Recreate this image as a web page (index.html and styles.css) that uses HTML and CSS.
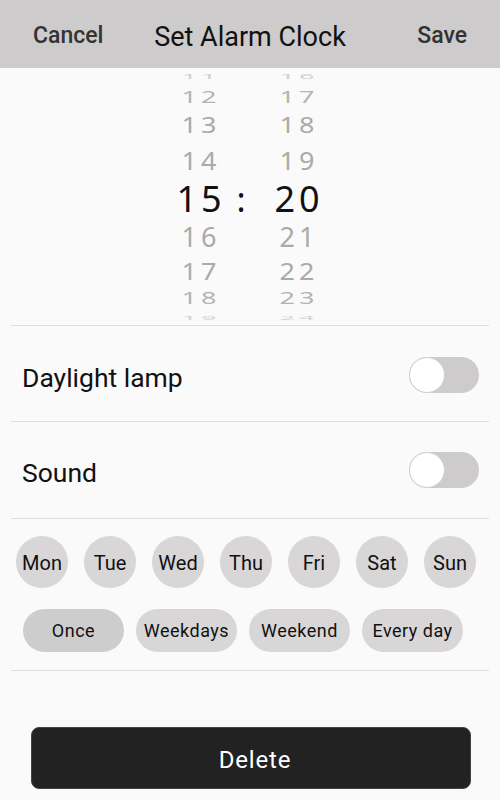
FILE: index.html
```html
<!DOCTYPE html>
<html>
<head>
<meta charset="utf-8">
<link rel="stylesheet" href="styles.css">
</head>
<body>
<div class="screen">
  <header class="topbar">
    <span class="action cancel">Cancel</span>
    <span class="title">Set Alarm Clock</span>
    <span class="action save">Save</span>
  </header>

  <section class="picker">
    <div class="cell"><span class="num s11">11</span></div><div class="cell"></div><div class="cell"><span class="num s11">16</span></div>
    <div class="cell"><span class="num s12">12</span></div><div class="cell"></div><div class="cell"><span class="num s12">17</span></div>
    <div class="cell"><span class="num s13">13</span></div><div class="cell"></div><div class="cell"><span class="num s13">18</span></div>
    <div class="cell"><span class="num s14">14</span></div><div class="cell"></div><div class="cell"><span class="num s14">19</span></div>
    <div class="cell"><span class="num cur">15</span></div><div class="cell"><span class="colon">:</span></div><div class="cell"><span class="num cur">20</span></div>
    <div class="cell"><span class="num s16">16</span></div><div class="cell"></div><div class="cell"><span class="num s16">21</span></div>
    <div class="cell"><span class="num s17">17</span></div><div class="cell"></div><div class="cell"><span class="num s17">22</span></div>
    <div class="cell"><span class="num s18">18</span></div><div class="cell"></div><div class="cell"><span class="num s18">23</span></div>
    <div class="cell"><span class="num s19">19</span></div><div class="cell"></div><div class="cell"><span class="num s19">24</span></div>
  </section>

  <div class="setting first">
    <span class="label">Daylight lamp</span>
    <span class="toggle"><span class="knob"></span></span>
  </div>
  <div class="setting second">
    <span class="label">Sound</span>
    <span class="toggle"><span class="knob"></span></span>
  </div>

  <section class="repeat">
    <div class="days">
      <span class="day">Mon</span>
      <span class="day">Tue</span>
      <span class="day">Wed</span>
      <span class="day">Thu</span>
      <span class="day">Fri</span>
      <span class="day">Sat</span>
      <span class="day">Sun</span>
    </div>
    <div class="presets">
      <span class="pill active">Once</span>
      <span class="pill">Weekdays</span>
      <span class="pill">Weekend</span>
      <span class="pill">Every day</span>
    </div>
  </section>

  <div class="footer">
    <button class="delete">Delete</button>
  </div>
</div>
</body>
</html>
```
FILE: styles.css
```css
* { box-sizing: border-box; }
html, body { margin: 0; padding: 0; }
body {
  background: #fafafa;
  font-family: Roboto, "Noto Sans", sans-serif;
  color: #111;
}
.screen {
  width: 500px;
  height: 800px;
  overflow: hidden;
  background: #fafafa;
}
.topbar {
  height: 68px;
  background: #cdcbcb;
  display: grid;
  grid-template-columns: 1fr auto 1fr;
  align-items: center;
  padding: 0 33px;
}
.action {
  font-size: 23px;
  color: #333;
  font-weight: 500;
  margin-top: 3px;
}
.save { justify-self: end; }
.title {
  font-size: 27px;
  color: #111;
  margin-top: 5px;
}

.picker {
  height: 258px;
  margin: 0 11px;
  border-bottom: 1px solid #dedede;
  display: grid;
  grid-template-columns: 60px 24px 88px;
  grid-template-rows: 17px 23px 33px 38px 39px 36px 32px 23px 16px;
  padding-left: 158px;
  overflow: hidden;
  font-family: "Noto Sans", sans-serif;
}
.cell {
  display: flex;
  align-items: center;
  justify-content: center;
}
.num {
  display: inline-block;
  font-size: 27px;
  line-height: 1;
  letter-spacing: 4px;
  padding-left: 4px;
  color: #aaa;
}
.s11 { transform: scaleY(0.27); color: #cfcfcf; }
.s12 { transform: scaleY(0.63); color: #b3b3b3; }
.s13 { transform: scaleY(0.8); }
.s14 { transform: scaleY(0.95); }
.s16 { transform: scaleY(1); }
.s17 { transform: scaleY(0.9); }
.s18 { transform: scaleY(0.63); color: #b3b3b3; }
.s19 { transform: scaleY(0.22); color: #d3d3d3; }
.num.cur {
  font-size: 36px;
  color: #111;
  letter-spacing: 4px;
}
.colon {
  font-size: 34px;
  line-height: 1;
  color: #111;
}

.setting {
  margin: 0 11px;
  border-bottom: 1px solid #dedede;
  display: flex;
  align-items: center;
  justify-content: space-between;
  padding: 0 10px 0 11px;
}
.setting.first { height: 96px; padding-top: 2px; }
.setting.second { height: 97px; }
.label {
  font-size: 26.5px;
  color: #111;
  margin-top: 5px;
}
.toggle {
  width: 70px;
  height: 36px;
  border-radius: 18px;
  background: #cdcbcb;
  display: flex;
  align-items: center;
}
.knob {
  width: 36px;
  height: 36px;
  border-radius: 50%;
  background: #fff;
  border: 1px solid #d0d0d0;
}

.repeat {
  margin: 0 11px;
  height: 152px;
  border-bottom: 1px solid #dedede;
  padding-top: 17px;
}
.days {
  display: flex;
  gap: 16px;
  padding-left: 5px;
}
.day {
  width: 52px;
  height: 52px;
  border-radius: 50%;
  background: #d8d6d6;
  display: flex;
  align-items: center;
  justify-content: center;
  font-size: 20px;
  color: #111;
  padding-top: 2px;
}
.presets {
  display: flex;
  gap: 12px;
  margin-top: 21px;
  padding-left: 12px;
}
.pill {
  width: 101px;
  height: 43px;
  border-radius: 22px;
  background: #d8d6d6;
  display: flex;
  align-items: center;
  justify-content: center;
  font-size: 18px;
  color: #111;
  letter-spacing: 0.5px;
}
.pill.active { background: #cecdcd; }

.footer {
  padding: 56px 29px 0 31px;
}
.delete {
  display: block;
  width: 440px;
  height: 62px;
  border-radius: 8px;
  background: #222;
  border: 1px solid #444;
  color: #fff;
  font-family: Roboto, sans-serif;
  font-size: 24px;
  letter-spacing: 0.8px;
  padding: 4px 0 0 8px;
}
```
